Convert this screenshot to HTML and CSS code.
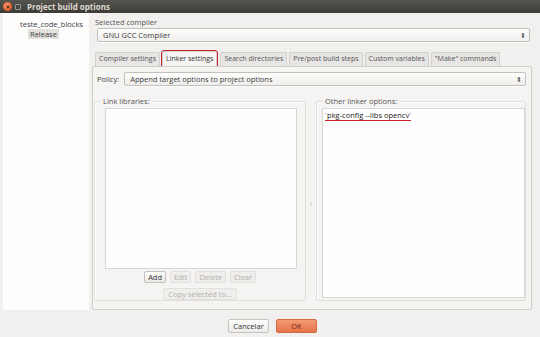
FILE: index.html
```html
<!DOCTYPE html>
<html lang="en">

<head>
  <meta charset="UTF-8">
  <title>Project build options</title>
  <link rel="stylesheet" href="styles.css">
</head>

<body>
  <div class="window">
    <!-- Title bar -->
    <div class="titlebar">
      <span class="btn-close">
        <svg width="8" height="8" viewBox="0 0 8 8"><path d="M2.5 2.5l3 3M5.5 2.5l-3 3" stroke="#5a2a10" stroke-width="1"/></svg>
      </span>
      <span class="btn-min"></span>
      <span class="title">Project build options</span>
    </div>

    <div class="content">
      <!-- Targets tree -->
      <div class="tree">
        <div class="tree-root">teste_code_blocks</div>
        <div class="tree-item">Release</div>
      </div>

      <div class="main">
        <div class="label-compiler">Selected compiler</div>
        <div class="combo compiler-combo">
          <span>GNU GCC Compiler</span>
          <span class="spin">⬍</span>
        </div>

        <div class="tabs">
          <span class="tab">Compiler settings</span>
          <span class="tab active">Linker settings</span>
          <span class="tab">Search directories</span>
          <span class="tab">Pre/post build steps</span>
          <span class="tab">Custom variables</span>
          <span class="tab">"Make" commands</span>
        </div>

        <div class="panel">
          <div class="policy-row">
            <span class="policy-label">Policy:</span>
            <div class="combo policy-combo">
              <span>Append target options to project options</span>
              <span class="spin">⬍</span>
            </div>
          </div>

          <div class="split">
            <div class="group libs">
              <div class="group-title">Link libraries:</div>
              <div class="listbox"></div>
              <div class="btn-row">
                <span class="small-btn">Add</span>
                <span class="small-btn disabled">Edit</span>
                <span class="small-btn disabled">Delete</span>
                <span class="small-btn disabled">Clear</span>
              </div>
              <div class="btn-row">
                <span class="small-btn disabled copy">Copy selected to...</span>
              </div>
            </div>

            <div class="handle"><span class="grip">⁞</span></div>

            <div class="group other">
              <div class="group-title">Other linker options:</div>
              <div class="textarea"><span class="opt">`pkg-config --libs opencv`</span></div>
            </div>
          </div>
        </div>

        <div class="dialog-buttons">
          <span class="dlg-btn">Cancelar</span>
          <span class="dlg-btn ok">OK</span>
        </div>
      </div>
    </div>
  </div>
</body>

</html>
```

FILE: styles.css
```css
* {
  box-sizing: border-box;
}

body {
  margin: 0;
  font-family: 'Open Sans', 'Noto Sans', sans-serif;
  font-size: 7.5px;
  color: #3c3c3c;
}

.window {
  width: 540px;
  height: 337px;
  background-color: #f1f0ee;
  display: flex;
  flex-direction: column;
  overflow: hidden;
}

.titlebar {
  height: 13px;
  flex: none;
  display: flex;
  align-items: center;
  padding-left: 3px;
  background: linear-gradient(#56554f, #3c3b37);
}

.btn-close {
  width: 9px;
  height: 9px;
  border-radius: 50%;
  background: radial-gradient(circle at 40% 35%, #f7936a, #dd4814);
  display: flex;
  align-items: center;
  justify-content: center;
}

.btn-min {
  width: 6px;
  height: 6px;
  margin-left: 3px;
  border: 1px solid #9d9b95;
  border-radius: 1px;
}

.title {
  margin-left: 6px;
  font-weight: bold;
  color: #dfdbd2;
  font-size: 8px;
}

.content {
  flex: 1;
  display: flex;
}

.tree {
  width: 86px;
  height: 297px;
  margin-left: 3px;
  background-color: #fdfdfc;
  padding-top: 6px;
}

.tree-root {
  padding-left: 17px;
  line-height: 10px;
}

.tree-item {
  display: inline-block;
  margin-left: 25px;
  padding: 0 2px;
  line-height: 10px;
  background-color: #e3e1de;
}

.main {
  margin-left: 3px;
  width: 444px;
  display: flex;
  flex-direction: column;
}

.label-compiler {
  margin-top: 4px;
  margin-left: 3px;
  line-height: 10px;
  color: #555;
}

.combo {
  height: 14px;
  display: flex;
  align-items: center;
  justify-content: space-between;
  padding: 0 3px 0 5px;
  border: 1px solid #c2c0bb;
  border-radius: 2px;
  background: linear-gradient(#fdfdfc, #efeeec);
  box-shadow: 0 1px 0 #fff;
}

.compiler-combo {
  margin: 1px 6px 0 5px;
}

.spin {
  font-size: 7px;
  color: #6a6a6a;
}

.tabs {
  display: flex;
  margin-top: 10px;
  margin-left: 3px;
  height: 14px;
  font-size: 7px;
}

.tab {
  height: 14px;
  line-height: 12px;
  padding: 0 3px;
  margin-right: 2px;
  border: 1px solid #d2d0cc;
  border-bottom: none;
  border-radius: 2px 2px 0 0;
  background-color: #e7e6e4;
  color: #555;
}

.tab.active {
  background-color: #f5f4f2;
  color: #333;
  outline: 1px solid #c9202e;
  outline-offset: 0;
  height: 16px;
  margin-top: -1px;
  line-height: 14px;
  padding: 0 3px;
  margin-right: 3px;
}

.panel {
  height: 244px;
  margin-right: 4px;
  border: 1px solid #d0cecb;
  border-radius: 2px;
  background-color: #f5f4f2;
  padding: 5px 5px 0 4px;
  display: flex;
  flex-direction: column;
}

.policy-row {
  display: flex;
  align-items: center;
  gap: 5px;
}

.policy-combo {
  flex: 1;
  margin-right: 0;
}

.split {
  display: flex;
  margin-top: 15px;
  height: 205px;
}

.group {
  position: relative;
  display: flex;
  flex-direction: column;
  border: 1px solid #e0dedb;
  border-radius: 2px;
  box-shadow: 1px 1px 0 #fff inset;
}

.group-title {
  position: absolute;
  top: -5px;
  left: 6px;
  padding: 0 2px;
  background-color: #f5f4f2;
  line-height: 9px;
  color: #555;
}

.libs {
  width: 217px;
  height: 200px;
  margin-left: -3px;
  padding: 6px 0 0 10px;
}

.listbox {
  width: 192px;
  height: 162px;
  background-color: #fefefe;
  border: 1px solid #d8d6d2;
}

.btn-row {
  display: flex;
  justify-content: center;
  gap: 4px;
  margin-top: 2px;
  padding-right: 10px;
}

.btn-row + .btn-row {
  margin-top: 5px;
}

.small-btn {
  height: 12px;
  line-height: 10px;
  padding: 0 3px;
  border: 1px solid #c4c2be;
  border-radius: 2px;
  background: linear-gradient(#fbfbfa, #ebeae8);
  color: #333;
}

.small-btn.disabled {
  border-color: #e2e0dd;
  background: #efeeec;
  color: #b0aeaa;
}

.small-btn.copy {
  padding: 0 4px;
}

.handle {
  width: 10px;
  display: flex;
  align-items: center;
  justify-content: center;
}

.grip {
  font-size: 6px;
  color: #aaa;
}

.other {
  width: 214px;
  height: 200px;
  padding: 6px 0 0 5px;
}

.textarea {
  width: 203px;
  height: 190px;
  background-color: #fefefe;
  border: 1px solid #d8d6d2;
  padding: 1px 2px;
}

.opt {
  display: inline-block;
  color: #222;
  line-height: 9px;
  border-bottom: 1px solid #d3202e;
}

.dialog-buttons {
  display: flex;
  gap: 7px;
  margin-top: 9px;
  margin-left: 136px;
}

.dlg-btn {
  width: 41px;
  height: 14px;
  line-height: 12px;
  text-align: center;
  border: 1px solid #c6c4c0;
  border-radius: 2px;
  background: linear-gradient(#fdfdfc, #eceae8);
  color: #333;
}

.dlg-btn.ok {
  border-color: #d4683e;
  background: linear-gradient(#f39a73, #e8744a);
  color: #6a2a10;
}
```
